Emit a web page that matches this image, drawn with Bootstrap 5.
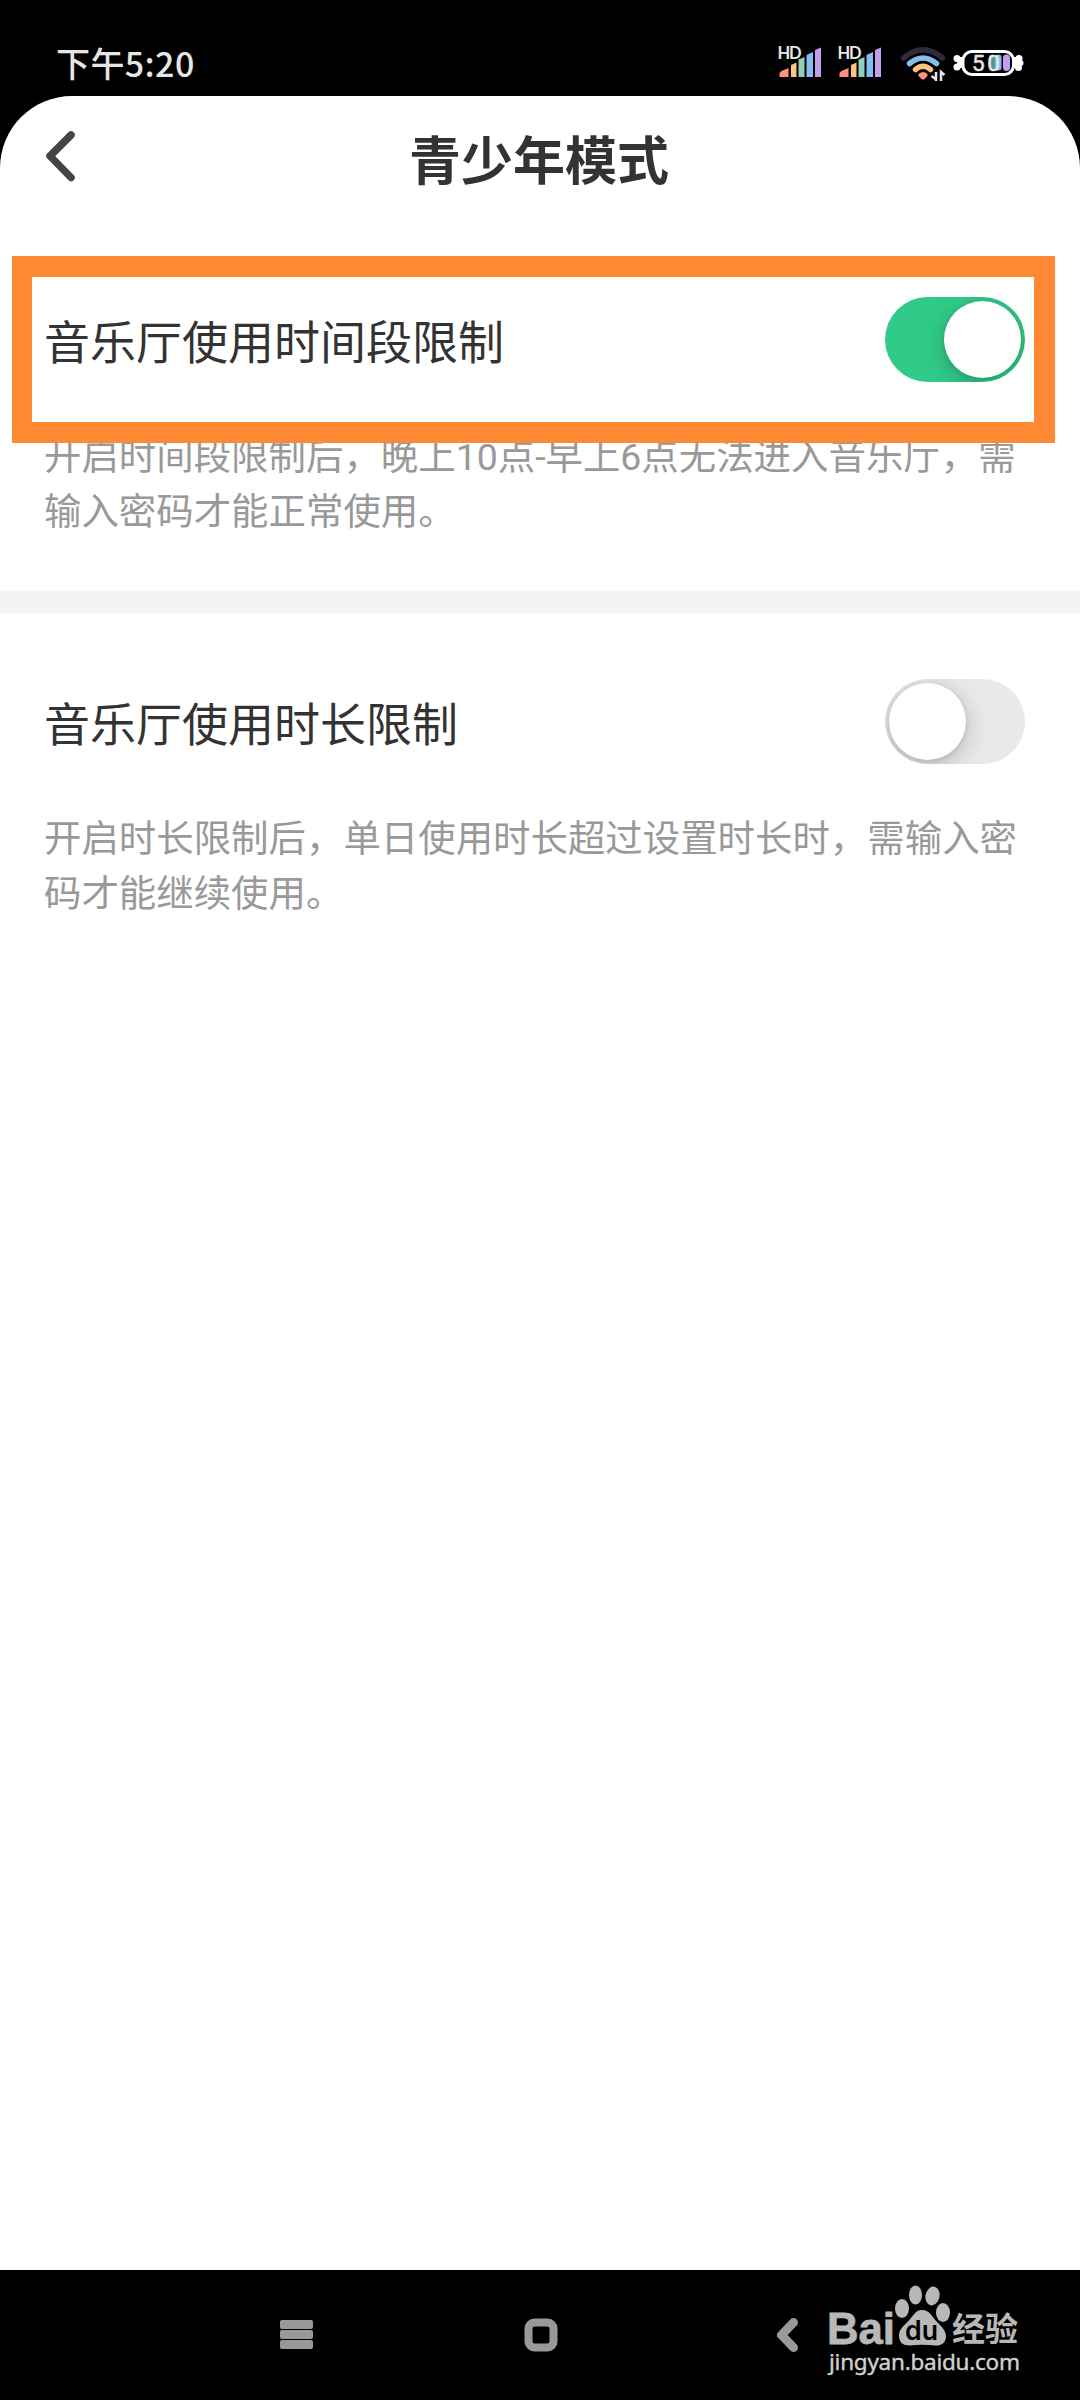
<!DOCTYPE html>
<html lang="zh-CN">
<head>
<meta charset="utf-8">
<meta name="viewport" content="width=device-width, initial-scale=1">
<title>青少年模式</title>
<link href="https://cdn.jsdelivr.net/npm/bootstrap@5.3.0/dist/css/bootstrap.min.css" rel="stylesheet">
<style>
  body { font-family: Roboto, "Noto Sans CJK SC", sans-serif; background: #000; color: #333; width: 1080px; }
  .screen { height: 2400px; overflow: hidden; }
  .statusbar { height: 96px; padding: 0 55px 0 56px; }
  .clock { font: 500 34px/50px "Noto Sans CJK SC", sans-serif; color: #e6e6e6; margin-top: 38px; letter-spacing: .4px; }
  .panel { height: 2174px; border-radius: 72px 72px 0 0; }
  .titlebar { height: 130px; }
  .titlebar h1 { font: 700 52px/76px "Noto Sans CJK SC", sans-serif; margin: 0; padding: 24px 2px 0 0; color: #333; }
  .back { width: 120px; }
  .setting { padding: 71px 55px 0 44px; }
  .setting-timed { height: 365px; }
  .setting-length { padding-top: 66px; }
  .setting-name { font-size: 46px; line-height: 68px; margin-top: 12px; }
  .setting-note { font-size: 37.43px; line-height: 54.5px; color: #999; margin: 0; padding-top: 48px; white-space: nowrap; }
  .toggle { width: 140px; height: 85px; border-radius: 43px; background: #e9e9e9; padding: 4px; overflow: hidden; }
  .toggle.is-on { background: #30cb89; }
  .knob { width: 77px; height: 77px; border-radius: 50%; background: #fff; box-shadow: 0 6px 24px rgba(0,0,0,.22), 0 1px 5px rgba(0,0,0,.12); }
  .highlight { left: 12px; top: 256px; width: 1043px; height: 187px; border: 21px solid #ff8933; border-left-width: 20px; }
  .divider { height: 22px; background: #f4f4f4; }
  .navbar-sys { height: 130px; }
</style>
</head>
<body>
<div class="screen position-relative d-flex flex-column">
  <header class="statusbar d-flex justify-content-between flex-shrink-0">
    <div class="clock">下午5:20</div>
    <svg class="status-icons" width="250" height="96" viewBox="775 0 250 96">
      <defs>
        <g id="signal">
          <path fill="#ff8f80" d="M0 77v-4l2-2 7-3v9z"/><path fill="#ffc37c" d="M11.500 77V65l5.500-2.500V77z"/>
          <path fill="#91d0bd" d="M19 77V59.500l6-2.500V77z"/><path fill="#85bdf0" d="M27 77V55l6.500-3V77z"/>
          <path fill="#c49cec" d="M35.500 77V50l6-2.500V77z"/>
          <text x="-2" y="59" font-family="Lato" font-weight="700" font-size="16.500" fill="#e6e6e6" textLength="24">HD</text>
        </g>
      </defs>
      <use href="#signal" x="779.500"/><use href="#signal" x="839.500"/>
      <g fill="none" stroke-linecap="round" stroke-width="5.500">
        <path stroke="#302d38" d="M903.500 58Q923 41.500 942.500 58"/>
        <path stroke="#85bdf0" d="M909.500 63.500Q923 52.500 936.500 63.500"/>
        <path stroke="#ffc37c" d="M915.500 69.500Q923 63 930.500 69.500"/>
      </g>
      <path fill="#ff8f80" d="M918.500 74q5-4 9 0 1 1-1 3l-2 2q-1.500 1-3 0l-3-3z"/>
      <path fill="none" stroke="#e6e6e6" stroke-width="2.500" d="M936 72v9M935.500 79l-4-3M941 81v-9l3.500 3"/>
      <g fill="#fff"><circle cx="957" cy="58.500" r="3.500"/><circle cx="957" cy="67" r="3.500"/><path d="M964 57l-6 0-1 5 1 6 6 0z"/><circle cx="1019" cy="58.500" r="3.500"/><circle cx="1020.500" cy="63" r="3"/><circle cx="1018.500" cy="67.500" r="3.500"/><path d="M1013 57l6 0 1 6-1 5-6 0z"/></g>
      <rect x="963" y="51.500" width="50.500" height="23" rx="9" fill="#000" stroke="#fff" stroke-width="3"/>
      <rect x="989" y="54.500" width="6" height="16" rx="3" fill="#57978a"/><rect x="995" y="54.500" width="6.500" height="16" rx="3" fill="#85bdf0"/>
      <rect x="1003" y="54.500" width="7" height="16.500" rx="3.500" fill="#c49cec"/>
      <text x="972" y="71" font-family="Roboto" font-size="22.500" fill="#e6e6e6" stroke="#e6e6e6" stroke-width=".5" textLength="28">50</text>
    </svg>
  </header>

  <main class="panel bg-white flex-shrink-0">
    <div class="titlebar d-flex">
      <svg class="back" height="130" viewBox="0 96 120 130" fill="none" stroke="#444" stroke-width="7.500" stroke-linecap="round" stroke-linejoin="round"><path d="M71 135 50 156 71 177.500"/></svg>
      <h1 class="flex-grow-1 text-center">青少年模式</h1>
      <div class="back"></div>
    </div>
    <section class="setting setting-timed">
      <div class="d-flex justify-content-between">
        <div class="setting-name">音乐厅使用时间段限制</div>
        <div class="toggle is-on d-flex justify-content-end"><div class="knob"></div></div>
      </div>
      <p class="setting-note">开启时间段限制后，晚上10点-早上6点无法进入音乐厅，需<br>输入密码才能正常使用。</p>
    </section>
    <div class="divider"></div>
    <section class="setting setting-length">
      <div class="d-flex justify-content-between">
        <div class="setting-name">音乐厅使用时长限制</div>
        <div class="toggle d-flex"><div class="knob"></div></div>
      </div>
      <p class="setting-note">开启时长限制后，单日使用时长超过设置时长时，需输入密<br>码才能继续使用。</p>
    </section>
  </main>

  <footer class="navbar-sys flex-shrink-0">
    <svg class="d-block" width="1080" height="130" viewBox="0 2270 1080 130">
      <g fill="#999"><rect x="280" y="2320" width="33" height="9" rx="2"/><rect x="280" y="2330" width="33" height="9" rx="2"/><rect x="280" y="2340" width="33" height="9" rx="2"/></g>
      <rect x="528.500" y="2322.500" width="25" height="25" rx="6" fill="none" stroke="#999" stroke-width="8"/>
      <path fill="none" stroke="#999" stroke-width="9" stroke-linecap="round" stroke-linejoin="round" d="M793.500 2322.500 781.500 2335 793.500 2347.500"/>
      <g fill="#b8b8b8">
        <text x="827" y="2344" font-family="Liberation Sans" font-weight="700" font-size="44" textLength="68" lengthAdjust="spacingAndGlyphs" stroke="#b8b8b8" stroke-width=".8">Bai</text>
        <ellipse cx="902" cy="2308.500" rx="7" ry="9.500"/><ellipse cx="915.500" cy="2295" rx="6.500" ry="9.500"/>
        <ellipse cx="932.500" cy="2296" rx="7" ry="9.500" transform="rotate(12 932.500 2296)"/><ellipse cx="943" cy="2312.500" rx="7" ry="9.500"/>
        <path d="M922 2310c8 0 10 7 15 12s9 9 9 14c0 7-5 10-11 9.500-8-1-17-1-25 0-7 0-11-3-11-10 0-6 4-9 9-14s7-11.500 14-11.500z"/>
        <text x="905" y="2340" font-family="Inter" font-weight="600" font-size="27" fill="#000" textLength="33" lengthAdjust="spacingAndGlyphs">du</text>
        <text x="952" y="2341" font-family="Noto Sans CJK SC" font-weight="700" font-size="33" textLength="66">经验</text>
        <text x="829" y="2370" font-family="Noto Sans" font-size="22.500" fill="#d0d0d0" stroke="#d0d0d0" stroke-width=".4" textLength="191">jingyan.baidu.com</text>
      </g>
    </svg>
  </footer>

  <div class="highlight position-absolute"></div>
</div>
<script src="https://cdn.jsdelivr.net/npm/bootstrap@5.3.0/dist/js/bootstrap.bundle.min.js"></script>
</body>
</html>
